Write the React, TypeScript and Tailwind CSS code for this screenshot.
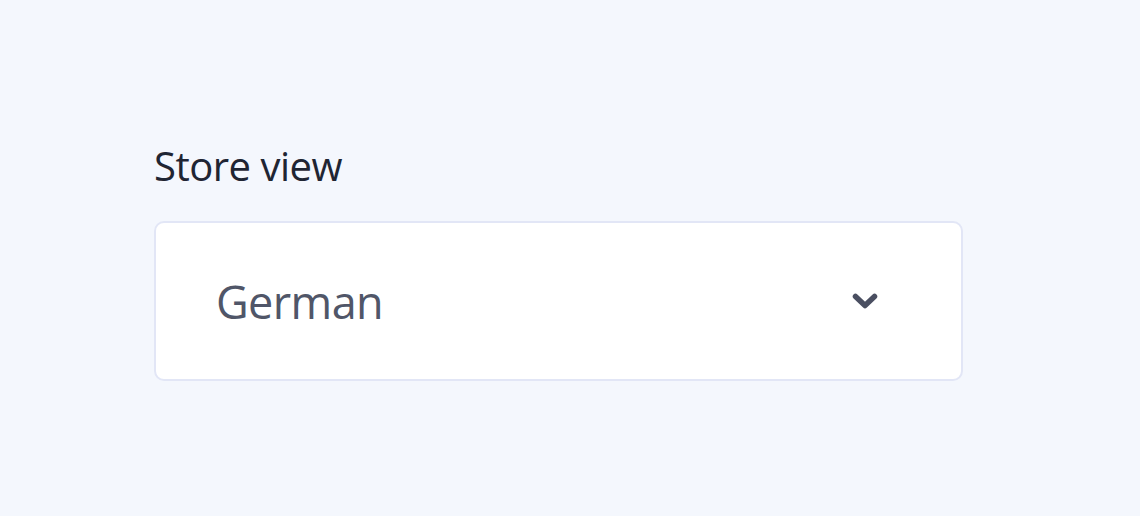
import React from "react";

export default function App() {
  return (
    <div className="w-[1140px] h-[516px] bg-[#f4f7fd] flex flex-col pl-[154px] pt-[138px]" style={{ fontFamily: '"Open Sans", "Noto Sans", sans-serif' }}>
      <label className="text-[40px] leading-[56px] text-[#1f2533] tracking-[-0.5px]">Store view</label>
      <div className="mt-[27px] w-[809px] h-[160px] bg-white border-2 border-[#e2e6f6] rounded-[10px] flex items-center pl-[60px] pr-[83px]">
        <span className="flex-1 text-[45px] text-[#505668] tracking-[-0.6px] pt-[2px]">German</span>
        <svg width="26" height="16" viewBox="0 0 26 16" fill="none">
          <path d="M3.5 3.5 L13 12.5 L22.5 3.5" stroke="#4a4f61" strokeWidth="5.5" strokeLinecap="round" strokeLinejoin="round" />
        </svg>
      </div>
    </div>
  );
}
